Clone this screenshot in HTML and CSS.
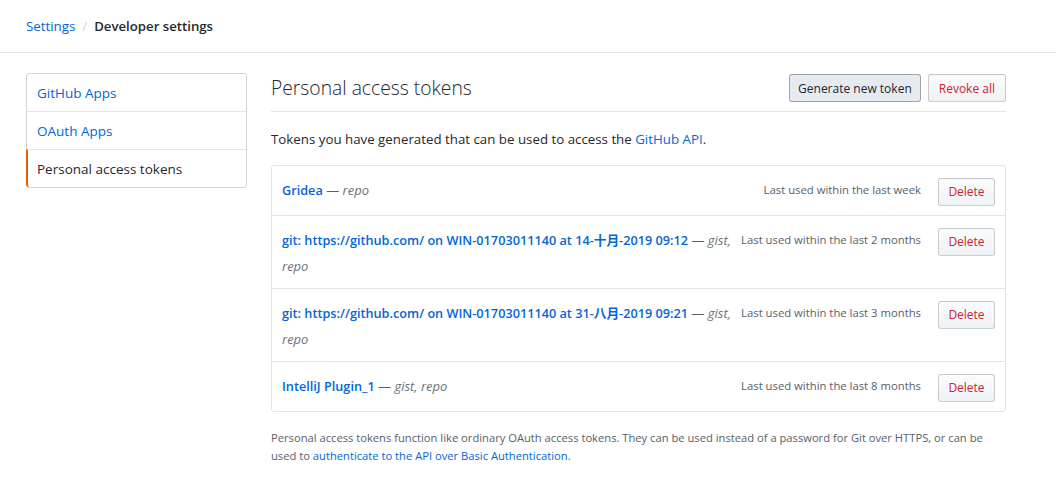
FILE: index.html
```html
<!DOCTYPE html>
<html>
<head>
<meta charset="utf-8">
<link rel="stylesheet" href="styles.css">
</head>
<body>
<header class="page-head">
  <nav class="breadcrumb">
    <a href="#" class="crumb-link">Settings</a>
    <span class="crumb-sep">/</span>
    <span class="crumb-current">Developer settings</span>
  </nav>
</header>
<div class="container">
  <nav class="menu">
    <a href="#" class="menu-item">GitHub Apps</a>
    <a href="#" class="menu-item">OAuth Apps</a>
    <a href="#" class="menu-item selected">Personal access tokens</a>
  </nav>
  <main class="main">
    <div class="subhead">
      <h2 class="subhead-title">Personal access tokens</h2>
      <div class="subhead-actions">
        <a href="#" class="btn btn-sm btn-active">Generate new token</a>
        <a href="#" class="btn btn-sm btn-danger">Revoke all</a>
      </div>
    </div>
    <p class="intro">Tokens you have generated that can be used to access the <a href="#">GitHub API</a>.</p>
    <div class="list-group">
      <div class="list-item">
        <a href="#" class="btn btn-sm btn-danger float-right del">Delete</a>
        <small class="last-used">Last used within the last week</small>
        <span class="token-desc"><a href="#" class="token-name">Gridea</a> — <em class="scopes">repo</em></span>
      </div>
      <div class="list-item">
        <a href="#" class="btn btn-sm btn-danger float-right del">Delete</a>
        <small class="last-used">Last used within the last 2 months</small>
        <span class="token-desc"><a href="#" class="token-name">git: https://github.com/ on WIN-01703011140 at 14-十月-2019 09:12</a> — <em class="scopes">gist, repo</em></span>
      </div>
      <div class="list-item">
        <a href="#" class="btn btn-sm btn-danger float-right del">Delete</a>
        <small class="last-used">Last used within the last 3 months</small>
        <span class="token-desc"><a href="#" class="token-name">git: https://github.com/ on WIN-01703011140 at 31-八月-2019 09:21</a> — <em class="scopes">gist, repo</em></span>
      </div>
      <div class="list-item">
        <a href="#" class="btn btn-sm btn-danger float-right del">Delete</a>
        <small class="last-used">Last used within the last 8 months</small>
        <span class="token-desc"><a href="#" class="token-name">IntelliJ Plugin_1</a> — <em class="scopes">gist, repo</em></span>
      </div>
    </div>
    <p class="note">Personal access tokens function like ordinary OAuth access tokens. They can be used instead of a password for Git over HTTPS, or can be used to <a href="#">authenticate to the API over Basic Authentication</a>.</p>
  </main>
</div>
</body>
</html>
```

FILE: styles.css
```css
* { box-sizing: border-box; }
body {
  margin: 0;
  font-family: "Open Sans", "Noto Sans CJK SC", sans-serif;
  font-size: 13px;
  color: #24292e;
  background: #fff;
}
a { color: #0366d6; text-decoration: none; }

.page-head {
  height: 53px;
  border-bottom: 1px solid #e1e4e8;
  padding: 14px 26px 0;
}
.breadcrumb {
  display: flex;
  align-items: center;
  gap: 7px;
  font-size: 13.3px;
  line-height: 24px;
}
.crumb-sep { color: #d1d5da; }
.crumb-current { font-weight: 600; font-size: 13.2px; }

.container {
  display: flex;
  gap: 24px;
  width: 980px;
  margin-left: 26px;
  padding-top: 20px;
}
.menu {
  width: 221px;
  flex: none;
  align-self: flex-start;
  display: flex;
  flex-direction: column;
  border: 1px solid #d1d5da;
  border-radius: 3px;
}
.menu-item {
  height: 38px;
  display: flex;
  align-items: center;
  padding-left: 10px;
  font-size: 13.5px;
  border-top: 1px solid #e1e4e8;
}
.menu-item:first-child { border-top: 0; height: 37px; }
.menu-item.selected {
  color: #24292e;
  border-left: 2px solid #e36209;
  margin-left: -1px;
  padding-left: 9px;
  border-radius: 0 0 0 3px;
}

.main { flex: 1; min-width: 0; }
.subhead {
  display: flex;
  align-items: center;
  justify-content: space-between;
  border-bottom: 1px solid #e1e4e8;
  height: 39px;
  padding-bottom: 8px;
}
.subhead-title {
  margin: 0;
  font-size: 19.3px;
  font-weight: 300;
  line-height: 30px;
}
.subhead-actions { display: flex; gap: 7px; }
.btn {
  display: inline-flex;
  align-items: center;
  justify-content: center;
  height: 28px;
  padding: 0 10px;
  font-size: 12px;
  border: 1px solid rgba(27,31,35,.2);
  border-radius: 3px;
  background: linear-gradient(#fafbfc, #eff3f6);
  color: #24292e;
}
.btn-active { background: #e6ebf1; border-color: rgba(27,31,35,.35); padding: 0 8px; }
.btn-danger { color: #cb2431; }

.intro {
  margin: 16px 0 15px;
  font-size: 13.3px;
  line-height: 22px;
}

.list-group {
  border: 1px solid #e1e4e8;
  border-radius: 3px;
}
.list-item {
  padding: 12px 10px 9px;
  border-top: 1px solid #e1e4e8;
  line-height: 25.5px;
}
.list-item:first-child { border-top: 0; }
.list-item::after { content: ""; display: block; clear: both; }
.float-right { float: right; }
.del { margin-left: 17px; width: 57px; padding: 0; }
.last-used {
  float: right;
  font-size: 11.3px;
  color: #586069;
  line-height: 24px;
  margin-left: 8px;
}
.token-desc { font-size: 13px; color: #586069; }
.token-name { font-weight: 600; font-size: 12.7px; }
.scopes { color: #6a737d; }

.note {
  margin: 17px 0 0;
  font-size: 11.2px;
  line-height: 18px;
  color: #586069;
}
```
